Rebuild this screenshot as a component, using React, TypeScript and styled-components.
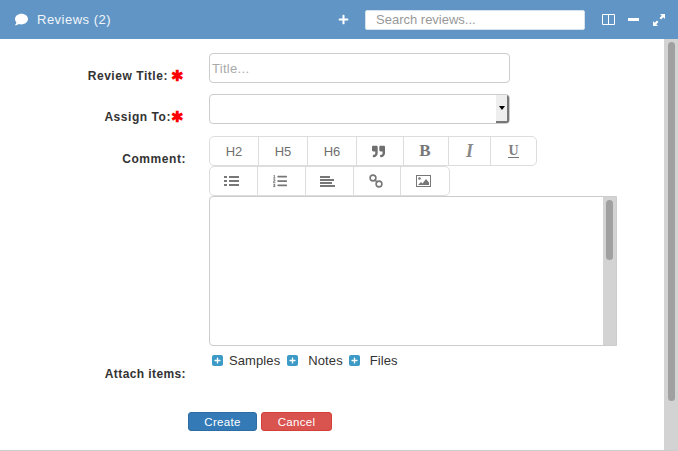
import React from "react";
import styled, { createGlobalStyle } from "styled-components";
import { FaComment, FaPlus, FaQuoteRight, FaListOl } from "react-icons/fa";

const Global = createGlobalStyle`
  html, body { margin: 0; padding: 0; height: 100%; overflow: hidden; background: #fff; }
  #root { height: 100%; }
  * { box-sizing: border-box; }
`;
const Page = styled.div`
  width: 678px; height: 451px; display: flex; flex-direction: column;
  font-family: "Liberation Sans", Arial, sans-serif; font-size: 13px; color: #333;
  border-bottom: 1px solid #ccc; background: #fff;
`;
const Header = styled.header`
  height: 39px; flex: none; background: #6095c5; color: #fff; display: flex; align-items: center;
  padding: 0 13px 0 15px;
`;
const Title = styled.span`
  margin-left: 9px; font-size: 13px; letter-spacing: 0.5px; flex: 1; margin-top: -1px; color: #f2f6fa;
`;
const HeaderIcon = styled.span<{ $ml: number }>`
  display: flex; align-items: center; justify-content: center; color: #fff;
  margin-left: ${(p) => p.$ml}px;
`;
const Search = styled.input`
  width: 220px; height: 20px; margin-left: 16px; border: 1px solid #d5e1ec; border-radius: 2px; background: #fff;
  padding: 0 10px; font: 13px "Liberation Sans", Arial, sans-serif; outline: none;
  &::placeholder { color: #999; opacity: 1; }
`;
const Main = styled.div`flex: 1; display: flex; min-height: 0;`;
const Content = styled.div`flex: 1; padding-top: 14px; display: flex; flex-direction: column;`;
const Row = styled.div<{ $mb: number }>`
  display: grid; grid-template-columns: 186px 408px; column-gap: 23px; margin-bottom: ${(p) => p.$mb}px;
`;
const Label = styled.label<{ $pt: number; $pr?: number; $ls?: number }>`
  font-weight: bold; font-size: 12px; letter-spacing: ${(p) => p.$ls ?? 0.55}px; text-align: right; color: #333; white-space: nowrap;
  height: 30px; padding-top: ${(p) => p.$pt}px; padding-right: ${(p) => p.$pr ?? 0}px; line-height: 16px;
`;
const Star = styled.span<{ $ml: number }>`
  color: #f00; font-size: 15px; line-height: 14px; letter-spacing: 0; margin-left: ${(p) => p.$ml}px;
`;
const LabelInner = styled.span`display: inline-flex; align-items: center; justify-content: flex-end;`;
const TextInput = styled.input`
  width: 301px; height: 30px; border: 1px solid #ccc; border-radius: 4px; padding: 0 2px; outline: none; display: block;
  font: 13px "Liberation Sans", Arial, sans-serif; letter-spacing: 0.3px;
  &::placeholder { color: #aaa; opacity: 1; }
`;
const SelectBox = styled.div`
  width: 301px; height: 30px; border: 1px solid #ccc; border-radius: 4px; display: flex; justify-content: flex-end; overflow: hidden;
`;
const SelectArrow = styled.div`
  width: 13px; height: 100%; background: #eee; display: flex; align-items: center; justify-content: center;
  border-right: 2px solid #777; border-bottom: 2px solid #777;
  &::after { content: ""; border: 3px solid transparent; border-top: 4px solid #000; border-bottom: 0; }
`;
const Toolbar = styled.div`
  display: inline-flex; height: 30px; border: 1px solid #ddd; border-radius: 5px; vertical-align: top;
`;
const ToolRow = styled.div`display: flex; height: 30px;`;
const ToolBtn = styled.button<{ $w: number; $pr?: number }>`
  width: ${(p) => p.$w}px; height: 100%; background: transparent; border: 0; padding: 0 ${(p) => p.$pr ?? 0}px 0 0;
  border-right: 1px solid #ddd; color: #6f6f6f; display: flex; align-items: center; justify-content: center;
  font: 13px "Liberation Sans", Arial, sans-serif;
  &:last-child { border-right: 0; }
`;
const SerifGlyph = styled.span`
  font: bold 17px "Liberation Serif", serif; color: #777;
`;
const ItalicGlyph = styled(SerifGlyph)`font-style: italic; font-size: 18px; color: #8a8a8a;`;
const UnderGlyph = styled(SerifGlyph)`
  font-size: 14px; line-height: 11px; border-bottom: 1px solid #777; padding: 0 0 1px; color: #808080;
`;
const Editor = styled.div`
  width: 408px; height: 150px; border: 1px solid #ccc; border-radius: 4px 0 0 4px; display: flex; justify-content: flex-end; background: #fff;
`;
const Track = styled.div<{ $w: number }>`
  width: ${(p) => p.$w}px; flex: none; background: #d3d3d3; height: 100%; padding-left: ${(p) => (p.$w === 14 ? 4 : 3)}px;
`;
const Thumb = styled.div<{ $h: number; $t: number }>`
  width: 7px; height: ${(p) => p.$h}px; margin-top: ${(p) => p.$t}px;
  background: #a0a0a0; border-radius: 4px;
`;
const AttachList = styled.div`display: flex; align-items: center; padding: 7px 0 0 3px; height: 22px;`;
const AttachItem = styled.span<{ $g: number; $mr: number }>`
  display: inline-flex; align-items: center; letter-spacing: 0.1px; font-size: 13px; color: #333;
  gap: ${(p) => p.$g}px; margin-right: ${(p) => p.$mr}px;
`;
const PlusBox = styled.span`
  width: 11px; height: 11px; background: #3d9ac6; border-radius: 2px; display: flex; align-items: center; justify-content: center; color: #fff;
`;
const Actions = styled.div`display: flex; gap: 4px; padding-left: 188px; margin-top: 36px;`;
const ActionBtn = styled.button<{ $bg: string; $bd: string; $w: number }>`
  width: ${(p) => p.$w}px; height: 19px; padding: 0; border-radius: 3px; color: #fff; font: 11.5px "Liberation Sans", Arial, sans-serif; letter-spacing: 0.3px;
  background: ${(p) => p.$bg}; border: 1px solid ${(p) => p.$bd};
`;

const ColumnsIcon = () => (
  <svg width="13" height="11" viewBox="0 0 13 11"><path fill="none" stroke="#fff" strokeWidth="1" d="M.5.5h12v10H.5zM6.5.5v10" /></svg>
);
const MinusIcon = () => (
  <svg width="11" height="3" viewBox="0 0 11 3"><rect width="11" height="3" fill="#fff" /></svg>
);
const ExpandIcon = () => (
  <svg width="12" height="12" viewBox="0 0 12 12" fill="#fff"><path d="M7 0h5v5l-1.7-1.7-2.2 2.2-1.6-1.6 2.2-2.2zM0 12V7l1.7 1.7 2.2-2.2 1.6 1.6-2.2 2.2L5 12z" /></svg>
);
const ListUlIcon = () => (
  <svg width="15" height="12" viewBox="0 0 15 12" fill="#777"><path d="M0 1h3v2H0zM0 5h3v2H0zM0 9h3v2H0zM5 1h10v2H5zM5 5h10v2H5zM5 9h10v2H5z" /></svg>
);
const AlignIcon = () => (
  <svg width="15" height="11" viewBox="0 0 15 11" fill="#777"><path d="M0 0h10v2H0zM0 3h14v2H0zM0 6h12v2H0zM0 9h15v2H0z" /></svg>
);
const LinkIcon = () => (
  <svg width="14" height="14" viewBox="0 0 14 14" fill="none" stroke="#777"><circle cx="4" cy="4" r="2.9" strokeWidth="1.6" /><circle cx="10" cy="10" r="2.9" strokeWidth="1.6" /><path d="M5.5 5.5l3 3" strokeWidth="1.6" /></svg>
);
const ImageIcon = () => (
  <svg width="15" height="12" viewBox="0 0 15 12"><rect x=".5" y=".5" width="14" height="11" fill="#fff" stroke="#777" /><circle cx="3.5" cy="3.5" r="1.3" fill="#777" /><path d="M2 10l3-3 1.5 1.5L10 4l3 3.5V10z" fill="#777" /></svg>
);

export default function App() {
  return (
    <Page>
      <Global />
      <Header>
        <FaComment size={13} color="#fff" />
        <Title>Reviews (2)</Title>
        <HeaderIcon $ml={0}><FaPlus size={11} /></HeaderIcon>
        <Search placeholder="Search reviews..." />
        <HeaderIcon $ml={17}><ColumnsIcon /></HeaderIcon>
        <HeaderIcon $ml={13}><MinusIcon /></HeaderIcon>
        <HeaderIcon $ml={14}><ExpandIcon /></HeaderIcon>
      </Header>
      <Main>
        <Content>
          <Row $mb={11}>
            <Label $pt={15} $pr={2}><LabelInner>Review Title:<Star $ml={3}>✱</Star></LabelInner></Label>
            <TextInput placeholder="Title..." />
          </Row>
          <Row $mb={12}>
            <Label $pt={15} $pr={2}><LabelInner>Assign To:<Star $ml={0}>✱</Star></LabelInner></Label>
            <SelectBox><SelectArrow /></SelectBox>
          </Row>
          <Row $mb={0}>
            <Label $pt={15}>Comment:</Label>
            <div>
              <ToolRow>
                <Toolbar>
                  <ToolBtn $w={49}>H2</ToolBtn>
                  <ToolBtn $w={49}>H5</ToolBtn>
                  <ToolBtn $w={49}>H6</ToolBtn>
                  <ToolBtn $w={47} $pr={4}><FaQuoteRight size={13} /></ToolBtn>
                  <ToolBtn $w={45} $pr={2}><SerifGlyph>B</SerifGlyph></ToolBtn>
                  <ToolBtn $w={42}><ItalicGlyph>I</ItalicGlyph></ToolBtn>
                  <ToolBtn $w={45}><UnderGlyph>U</UnderGlyph></ToolBtn>
                </Toolbar>
              </ToolRow>
              <ToolRow>
                <Toolbar>
                  <ToolBtn $w={48} $pr={4}><ListUlIcon /></ToolBtn>
                  <ToolBtn $w={48} $pr={4}><FaListOl size={14} color="#777" /></ToolBtn>
                  <ToolBtn $w={48} $pr={4}><AlignIcon /></ToolBtn>
                  <ToolBtn $w={47} $pr={3}><LinkIcon /></ToolBtn>
                  <ToolBtn $w={48} $pr={3}><ImageIcon /></ToolBtn>
                </Toolbar>
              </ToolRow>
              <Editor><Track $w={13}><Thumb $h={60} $t={3} /></Track></Editor>
            </div>
          </Row>
          <Row $mb={0}>
            <Label $pt={20} $ls={0.4}>Attach items:</Label>
            <AttachList>
              <AttachItem $g={6} $mr={7}><PlusBox><FaPlus size={7} /></PlusBox>Samples</AttachItem>
              <AttachItem $g={10} $mr={6}><PlusBox><FaPlus size={7} /></PlusBox>Notes</AttachItem>
              <AttachItem $g={10} $mr={0}><PlusBox><FaPlus size={7} /></PlusBox>Files</AttachItem>
            </AttachList>
          </Row>
          <Actions>
            <ActionBtn $w={69} $bg="#337ab7" $bd="#2e6da4">Create</ActionBtn>
            <ActionBtn $w={71} $bg="#d9534f" $bd="#d43f3a">Cancel</ActionBtn>
          </Actions>
        </Content>
        <Track $w={14}><Thumb $h={359} $t={3} /></Track>
      </Main>
    </Page>
  );
}
